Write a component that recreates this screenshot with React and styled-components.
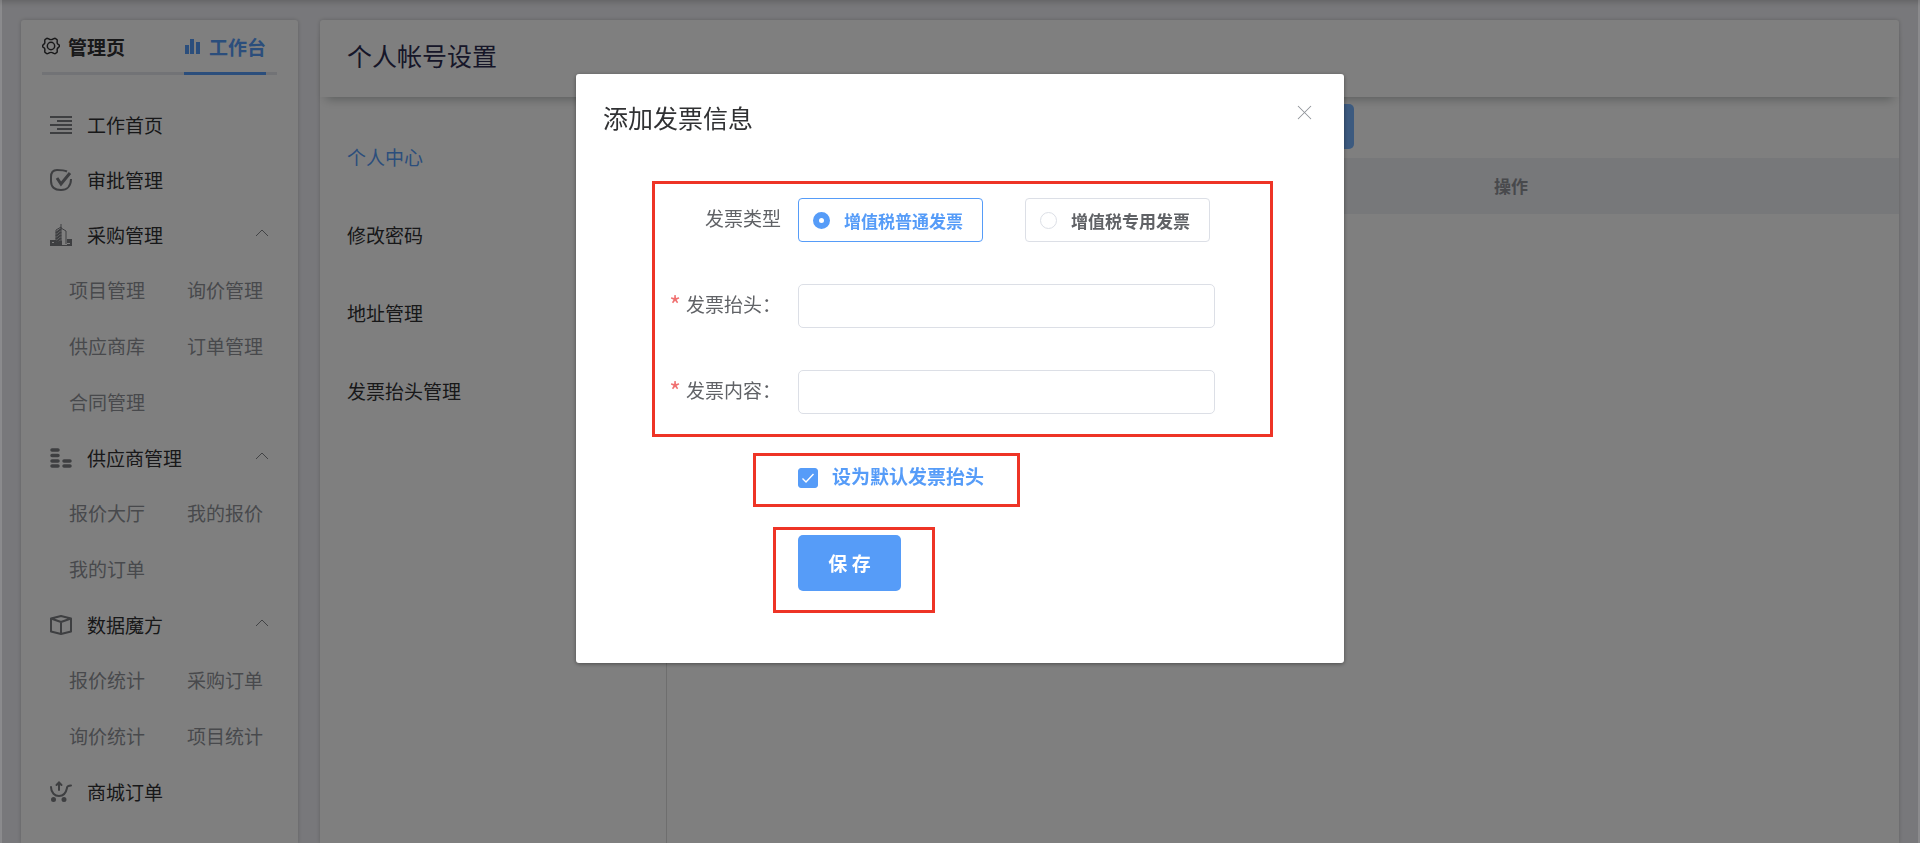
import { useState } from 'react';
import styled, { createGlobalStyle } from 'styled-components';
import { Settings, X } from 'lucide-react';

const GlobalStyle = createGlobalStyle`
  * {
    box-sizing: border-box;
  }

  body {
    margin: 0;
    font-family: "Noto Sans CJK SC", sans-serif;
    font-size: 19px;
    color: #303133;
    background: #F1F1F6;
  }

  h1, h2, ul {
    margin: 0;
    padding: 0;
    font-weight: 400;
    list-style: none;
  }

  a {
    color: inherit;
    text-decoration: none;
  }

  button, input {
    font: inherit;
  }
`;

const Page = styled.div`
  display: flex;
  gap: 22px;
  min-height: 100vh;
  padding: 20px 21px 0;
  box-shadow: inset 0 6px 6px -4px rgba(0, 0, 0, 0.2);
`;

const Card = styled.div`
  background: #FFFFFF;
  border-radius: 3px 3px 0 0;
  box-shadow: 0 0 4px rgba(0, 0, 0, 0.2);
`;

const Sidebar = styled(Card)`
  flex: none;
  width: 277px;
  padding: 0 21px;
`;

const Tabs = styled.nav`
  display: flex;
  justify-content: space-between;
  height: 55px;
  padding-right: 11px;
  box-shadow: inset 0 -3px #E4E7ED;
`;

const Tab = styled.a`
  display: flex;
  align-items: center;
  gap: 8px;
  font-weight: 700;
  color: ${({ $active }) => ($active ? '#569CF8' : '#303133')};
  border-bottom: 3px solid ${({ $active }) => ($active ? '#569CF8' : 'transparent')};
`;

const Menu = styled.ul`
  padding-top: 22px;
`;

const MenuItem = styled.a`
  display: flex;
  align-items: center;
  gap: 15px;
  height: 55px;
  padding: 0 8px;
`;

const SubMenu = styled.ul`
  display: grid;
  grid-template-columns: repeat(2, 1fr);
  margin-right: -28px;
  padding-left: 27px;
  line-height: 56px;
  color: #909399;
`;

const Content = styled(Card)`
  display: flex;
  flex: 1;
  flex-direction: column;
  min-width: 0;
`;

const Header = styled.header`
  padding: 0 27px;
  line-height: 70px;
  height: 77px;
  box-shadow: 0 8px 10px -6px rgba(0, 20, 15, 0.3);

  h1 {
    font-size: 25px;
    color: #2C2C50;
  }
`;

const Body = styled.div`
  display: flex;
  flex: 1;
`;

const SettingNav = styled.nav`
  flex: none;
  width: 347px;
  padding: 21px 27px;
  border-right: 1px solid #DDDDDD;
`;

const SettingLink = styled.a`
  display: block;
  line-height: 78px;
  color: ${({ $active }) => ($active ? '#569CF8' : '#303133')};
`;

const Panel = styled.section`
  flex: 1;
`;

const Toolbar = styled.div`
  display: flex;
  justify-content: center;
  padding: 7px 0 9px;
`;

const AddButton = styled.button`
  width: 142px;
  height: 45px;
  border: none;
  border-radius: 5px;
  background: #78B4FF;
`;

const Table = styled.table`
  width: 100%;
  border-collapse: collapse;

  th {
    height: 56px;
    padding: 0 0 2px;
    font-size: 17px;
    font-weight: 700;
    color: #909399;
    background: #EEF0F4;
  }

  th:first-child {
    width: 37%;
  }
`;

const Overlay = styled.div`
  position: fixed;
  inset: 0;
  padding-top: 74px;
  background: rgba(0, 0, 0, 0.5);
  border: solid rgba(255, 255, 255, 0.15);
  border-width: 0 2px;
`;

const Dialog = styled.section`
  width: 40%;
  min-width: 768px;
  margin: 0 auto;
  padding-bottom: 50px;
  background: #FFFFFF;
  border-radius: 3px;
  box-shadow: 0 1px 4px rgba(0, 0, 0, 0.4);
`;

const DialogHeader = styled.header`
  display: flex;
  justify-content: space-between;
  height: 107px;
  padding: 26px 27px;

  h2 {
    font-size: 25px;
    line-height: 34px;
  }
`;

const CloseButton = styled.button`
  display: flex;
  height: 24px;
  padding: 0;
  border: none;
  background: none;
  color: #909399;
  cursor: pointer;
`;

const Frame = styled.div`
  border: 3px solid #EE3426;
`;

const Fields = styled(Frame)`
  display: grid;
  gap: 42px;
  margin: 0 71px 16px 76px;
  padding: 14px 55px 20px 0;
`;

const Field = styled.div`
  display: flex;
`;

const Label = styled.label`
  display: flex;
  flex: none;
  justify-content: flex-end;
  gap: 5px;
  width: 143px;
  padding-right: 17px;
  line-height: 40px;
  color: #606266;

  &::before {
    content: ${({ $required }) => ($required ? '"*"' : 'none')};
    font-size: 25px;
    color: #F07070;
  }
`;

const TextBox = styled.input`
  flex: 1;
  min-width: 0;
  height: 44px;
  padding: 0 16px;
  border: 1px solid #DCDFE6;
  border-radius: 5px;
  outline: none;
`;

const RadioGroup = styled.div`
  display: flex;
  gap: 42px;
`;

const RadioBox = styled.label`
  display: flex;
  align-items: center;
  gap: 14px;
  width: 185px;
  height: 44px;
  padding-left: 14px;
  border: 1px solid ${({ $checked }) => ($checked ? '#569CF8' : '#DCDFE6')};
  border-radius: 4px;
  font-size: 17px;
  font-weight: 700;
  white-space: nowrap;
  color: ${({ $checked }) => ($checked ? '#569CF8' : '#606266')};
  cursor: pointer;
`;

const Radio = styled.input`
  flex: none;
  appearance: none;
  width: 17px;
  height: 17px;
  margin: 0;
  border: 1px solid #DCDFE6;
  border-radius: 50%;

  &:checked {
    border: 6px solid #569CF8;
  }
`;

const DefaultFrame = styled(Frame)`
  width: 267px;
  height: 54px;
  margin: 0 0 20px 177px;
  padding-left: 42px;
`;

const CheckLabel = styled.label`
  display: flex;
  align-items: center;
  gap: 14px;
  height: 44px;
  font-weight: 700;
  line-height: 40px;
  white-space: nowrap;
  color: #569CF8;
  cursor: pointer;
`;

const CheckText = styled.span`
  padding-bottom: 4px;
`;

const Checkbox = styled.input`
  flex: none;
  appearance: none;
  width: 20px;
  height: 20px;
  margin: 0;
  border: 1px solid #DCDFE6;
  border-radius: 3px;

  &:checked {
    border-color: #569CF8;
    background: #569CF8 url("data:image/svg+xml,%3Csvg xmlns='http://www.w3.org/2000/svg' viewBox='0 0 18 18' fill='none' stroke='white' stroke-width='1.4'%3E%3Cpath d='M3.5 9.5l3.5 3.5 7.5-8'/%3E%3C/svg%3E") no-repeat center;
  }
`;

const SaveFrame = styled(Frame)`
  width: 162px;
  height: 86px;
  margin-left: 197px;
  padding: 5px 22px;
`;

const SaveButton = styled.button`
  width: 103px;
  height: 56px;
  padding: 0 0 2px;
  border: none;
  border-radius: 5px;
  font-weight: 700;
  color: #FFFFFF;
  background: #569CF8;
  cursor: pointer;
`;

const Icon = styled.svg`
  flex: none;
  width: 22px;
  height: 22px;
  fill: none;
  stroke: #7C7E83;
  stroke-width: 2;
`;

const Arrow = styled.svg`
  width: 14px;
  height: 14px;
  margin: 0 0 4px auto;
  fill: none;
  stroke: #85878B;
`;

const BarsIcon = () => (
  <svg width="17" height="17" viewBox="0 0 17 17" fill="currentColor">
    <path d="M1 7h4v9H1zM6 1h4v15H6zM12 4h4v12h-4z" />
  </svg>
);

const GearIcon = () => (
  <svg width="18" height="18" viewBox="1 1 22 22" fill="none" stroke="currentColor" strokeWidth="1.800" strokeLinejoin="round">
    <path d="M7 2.500c2 0 2.500 1.700 5 1.700s3-1.700 5-1.700l2.300 1.700c1 1.800-.6 3 .6 4.800S23 10.500 22.500 12s-1.500 1.500-2.600 3 .4 3-.6 4.800L17 21.500c-2 0-2.500-1.700-5-1.700s-3 1.700-5 1.700l-2.300-1.700c-1-1.800.6-3-.6-4.800S1 13.500 1.500 12s1.500-1.500 2.600-3-.4-3 .6-4.800z" />
    <circle cx="12" cy="12" r="4.500" />
  </svg>
);

const HomeIcon = () => (
  <Icon viewBox="0 0 22 22">
    <path d="M0 3h22M7 7h15M0 11h22M7 15h15M0 19h22" />
  </Icon>
);

const ApproveIcon = () => (
  <Icon viewBox="0 0 22 22">
    <path d="M17 2.500C14 1 10 1 7 1 3 1 1 4 1 8v4c0 6 4 9 10 9s10-4 10-11" />
    <path d="M7 9l4 6 9-11" strokeWidth="3" />
  </Icon>
);

const PurchaseIcon = () => (
  <Icon viewBox="0 0 22 22">
    <path d="M6 20V6l5-3v17M11 0v4l5 3v13M0 21.500h22" strokeWidth="1" />
    <path d="M6 9l5-4M6 12l5-4M6 15l5-4M6 18l5-4M6 20l5-3" strokeWidth="2" />
    <path d="M1 21v-4h4v4M3 21l8-3v3M2 20h9M17 16h4v5h-4M17 18h4" strokeWidth="2" />
  </Icon>
);

const SupplierIcon = () => (
  <Icon viewBox="0 0 22 22">
    <path
      d="M2 3h6M2 8.500h6M2 14h6M2 19h6M14 14h6M14 19h6"
      strokeWidth="3.500"
      strokeLinecap="round"
    />
  </Icon>
);

const CubeIcon = () => (
  <Icon viewBox="0 0 22 22" strokeLinejoin="round">
    <path d="M1 4.500L11 2l10 2.500v13L11 20 1 17.500zM1 4.500L11 8l10-3.500M11 8v12" />
  </Icon>
);

const OrderIcon = () => (
  <Icon viewBox="0 0 22 22" strokeLinecap="round">
    <path d="M1 6c0 6 4 9 8 9s7-3 8-8c0-2 1-2.500 4-2.500" />
    <path d="M9 9V3M6.500 4L9 1.500 11.500 4" />
    <path d="M3.500 18.500v.1M14 18.500v.1" strokeWidth="5" />
  </Icon>
);

const menus = [
  { title: '工作首页', MenuIcon: HomeIcon },
  { title: '审批管理', MenuIcon: ApproveIcon },
  {
    title: '采购管理',
    MenuIcon: PurchaseIcon,
    items: ['项目管理', '询价管理', '供应商库', '订单管理', '合同管理'],
  },
  {
    title: '供应商管理',
    MenuIcon: SupplierIcon,
    items: ['报价大厅', '我的报价', '我的订单'],
  },
  {
    title: '数据魔方',
    MenuIcon: CubeIcon,
    items: ['报价统计', '采购订单', '询价统计', '项目统计'],
  },
  { title: '商城订单', MenuIcon: OrderIcon },
];

const settings = ['个人中心', '修改密码', '地址管理', '发票抬头管理'];

const invoiceTypes = ['增值税普通发票', '增值税专用发票'];

function SideMenu() {
  return (
    <Sidebar as="aside">
      <Tabs>
        <Tab href="#manage">
          <GearIcon />
          管理页
        </Tab>
        <Tab href="#workbench" $active>
          <BarsIcon />
          工作台
        </Tab>
      </Tabs>
      <Menu>
        {menus.map(({ title, MenuIcon, items }) => (
          <li key={title}>
            <MenuItem href={`#${title}`}>
              <MenuIcon />
              {title}
              {items && (
                <Arrow viewBox="0 0 14 14">
                  <path d="M1 10l6-6 6 6" />
                </Arrow>
              )}
            </MenuItem>
            {items && (
              <SubMenu>
                {items.map((item) => (
                  <li key={item}>
                    <a href={`#${item}`}>{item}</a>
                  </li>
                ))}
              </SubMenu>
            )}
          </li>
        ))}
      </Menu>
    </Sidebar>
  );
}

function InvoiceDialog() {
  const [type, setType] = useState(invoiceTypes[0]);
  const [isDefault, setIsDefault] = useState(true);

  return (
    <Overlay>
      <Dialog role="dialog" aria-labelledby="dialog-title">
        <DialogHeader>
          <h2 id="dialog-title">添加发票信息</h2>
          <CloseButton type="button" aria-label="关闭">
            <X size={25} strokeWidth={1} />
          </CloseButton>
        </DialogHeader>
        <form onSubmit={(event) => event.preventDefault()}>
          <Fields>
            <Field role="radiogroup" aria-labelledby="type-label">
              <Label as="span" id="type-label">发票类型</Label>
              <RadioGroup>
                {invoiceTypes.map((name) => (
                  <RadioBox key={name} $checked={type === name}>
                    <Radio
                      type="radio"
                      name="invoice-type"
                      checked={type === name}
                      onChange={() => setType(name)}
                    />
                    {name}
                  </RadioBox>
                ))}
              </RadioGroup>
            </Field>
            <Field>
              <Label htmlFor="invoice-title" $required>发票抬头：</Label>
              <TextBox id="invoice-title" type="text" />
            </Field>
            <Field>
              <Label htmlFor="invoice-content" $required>发票内容：</Label>
              <TextBox id="invoice-content" type="text" />
            </Field>
          </Fields>
          <DefaultFrame>
            <CheckLabel>
              <Checkbox
                type="checkbox"
                checked={isDefault}
                onChange={() => setIsDefault(!isDefault)}
              />
              <CheckText>设为默认发票抬头</CheckText>
            </CheckLabel>
          </DefaultFrame>
          <SaveFrame>
            <SaveButton type="submit">保 存</SaveButton>
          </SaveFrame>
        </form>
      </Dialog>
    </Overlay>
  );
}

export default function App() {
  return (
    <>
      <GlobalStyle />
      <Page>
        <SideMenu />
        <Content as="main">
          <Header>
            <h1>个人帐号设置</h1>
          </Header>
          <Body>
            <SettingNav>
              {settings.map((name, index) => (
                <SettingLink key={name} href={`#${name}`} $active={index === 0}>
                  {name}
                </SettingLink>
              ))}
            </SettingNav>
            <Panel>
              <Toolbar>
                <AddButton type="button" aria-label="添加" />
              </Toolbar>
              <Table>
                <thead>
                  <tr>
                    <th aria-label="发票" />
                    <th>操作</th>
                  </tr>
                </thead>
              </Table>
            </Panel>
          </Body>
        </Content>
      </Page>
      <InvoiceDialog />
    </>
  );
}
